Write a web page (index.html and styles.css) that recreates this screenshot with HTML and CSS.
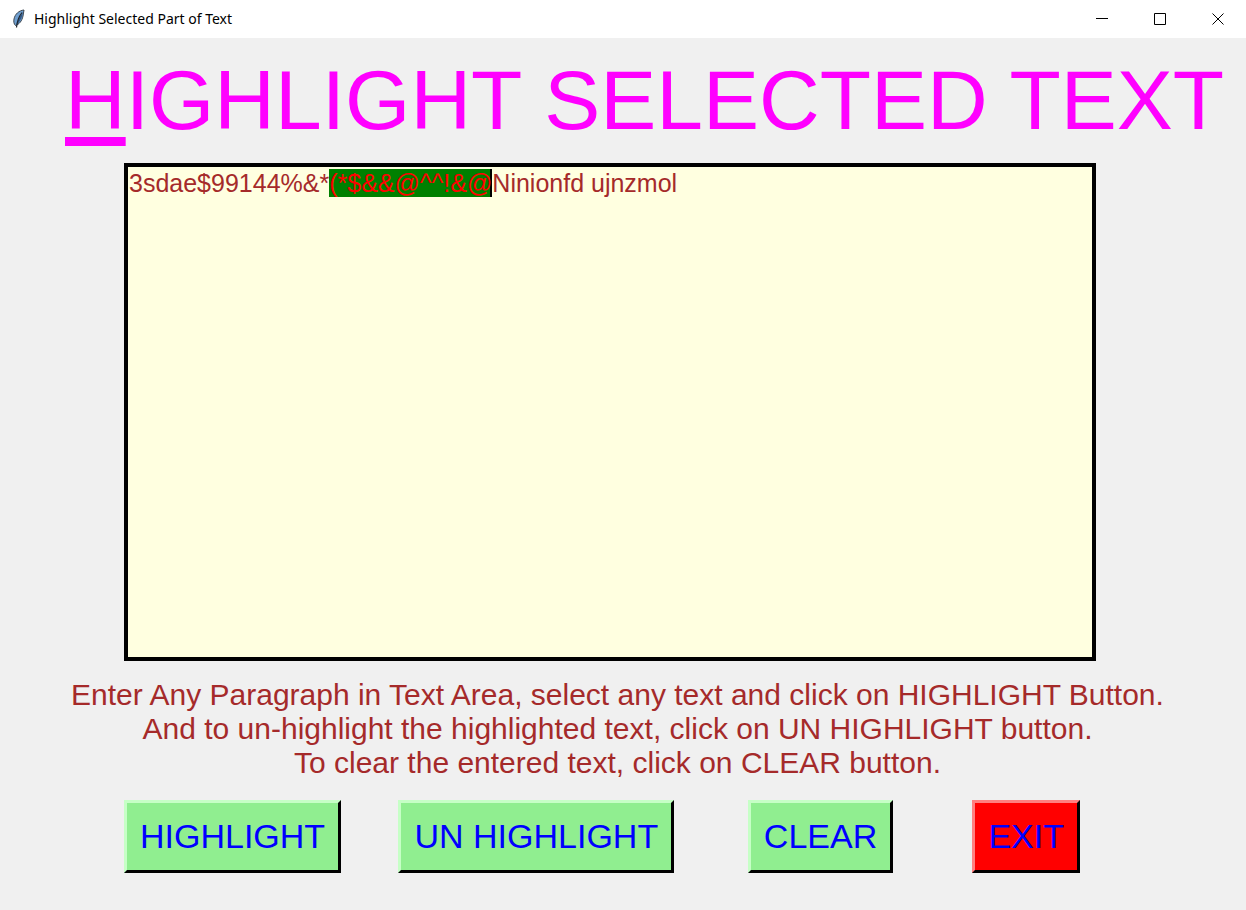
FILE: index.html
```html
<!DOCTYPE html>
<html lang="en">
<head>
<meta charset="utf-8">
<title>Highlight Selected Part of Text</title>
<link rel="stylesheet" href="styles.css">
</head>
<body>
<header class="titlebar">
  <svg class="app-icon" viewBox="0 0 16 20" aria-hidden="true">
    <path d="M14 1C9 1.500 5 5 4 10C3.500 12.500 3.800 15 5.500 16.500C9 15.500 12 12 13 7Z" fill="#6f9fd0" stroke="#3c4650" stroke-width="1"/>
    <path d="M13 3L11.500 9L8.500 14L6 16L9 9Z" fill="#2f5788"/>
    <path d="M12 3.500C8.500 8 7 12 6.500 18.500" fill="none" stroke="#20262c" stroke-width="1.200"/>
  </svg>
  <span class="caption">Highlight Selected Part of Text</span>
  <div class="window-controls">
    <button class="control" aria-label="Minimize"><svg viewBox="0 0 12 12"><path d="M0 5.500H12"/></svg></button>
    <button class="control" aria-label="Maximize"><svg viewBox="0 0 12 12"><path d="M.5 .5H11.500V11.500H.5Z"/></svg></button>
    <button class="control" aria-label="Close"><svg viewBox="0 0 12 12"><path d="M.5 .5L11.500 11.500M11.500 .5L.5 11.500"/></svg></button>
  </div>
</header>
<main class="content">
  <h1 class="heading"><span class="mnemonic">H</span>IGHLIGHT SELECTED TEXT</h1>
  <div class="editor" contenteditable="true" role="textbox" aria-multiline="true" aria-label="Text area" spellcheck="false">3sdae$99144%&amp;*<mark class="selected">(*$&amp;&amp;@^^!&amp;@</mark>Ninionfd ujnzmol</div>
  <p class="help">Enter Any Paragraph in Text Area, select any text and click on HIGHLIGHT Button.<br>And to un-highlight the highlighted text, click on UN HIGHLIGHT button.<br>To clear the entered text, click on CLEAR button.</p>
  <div class="actions">
    <button class="action">HIGHLIGHT</button>
    <button class="action">UN HIGHLIGHT</button>
    <button class="action">CLEAR</button>
    <button class="action exit">EXIT</button>
  </div>
</main>
</body>
</html>
```

FILE: styles.css
```css
* { box-sizing: border-box; }
body { margin: 0; min-height: 100vh; background: #f0f0f0; font-family: "Liberation Sans", Arial, sans-serif; }
.titlebar { display: flex; align-items: center; height: 38px; padding-left: 10px; background: #fff; }
.app-icon { width: 16px; height: 20px; }
.caption { margin-left: 8px; font: 14px/36px "Noto Sans", sans-serif; color: #000; }
.window-controls { display: flex; gap: 2px; margin-left: auto; }
.control { display: flex; align-items: center; justify-content: center; width: 56px; height: 38px; padding: 0; border: 0; background: none; }
.control svg { width: 12px; height: 12px; fill: none; stroke: #000; stroke-width: 1; }
.content { padding: 12px 20px 0 65px; }
.heading { margin: 0; font-size: 84px; line-height: 100px; font-weight: 400; color: #f0f; white-space: nowrap; }
.mnemonic { text-decoration: underline; text-decoration-thickness: 9px; text-underline-offset: 8px; }
.editor { height: 498px; margin: 13px 130px 0 59px; padding: 1px; border: 4px solid #000; background: #ffffe0; color: #a52a2a; font-size: 25px; line-height: 30px; }
.selected { background: #008000; color: #f00; box-shadow: inset -2px 0 #000; }
.help { margin: 17px 56px 0 0; font-size: 30px; line-height: 34px; color: #a52a2a; text-align: center; white-space: nowrap; }
.actions { display: grid; grid-template-columns: 275fr 350fr 225fr 106fr; justify-items: start; margin: 20px 146px 0 59px; }
.action { height: 73px; padding: 0 13px; border: 3px solid; border-color: #c6ffc6 #000 #000 #c6ffc6; background: #90ee90; color: #00f; font: 34px "Liberation Sans", Arial, sans-serif; }
.exit { border-color: #ff8080 #000 #000 #ff8080; background: #f00; }
```
